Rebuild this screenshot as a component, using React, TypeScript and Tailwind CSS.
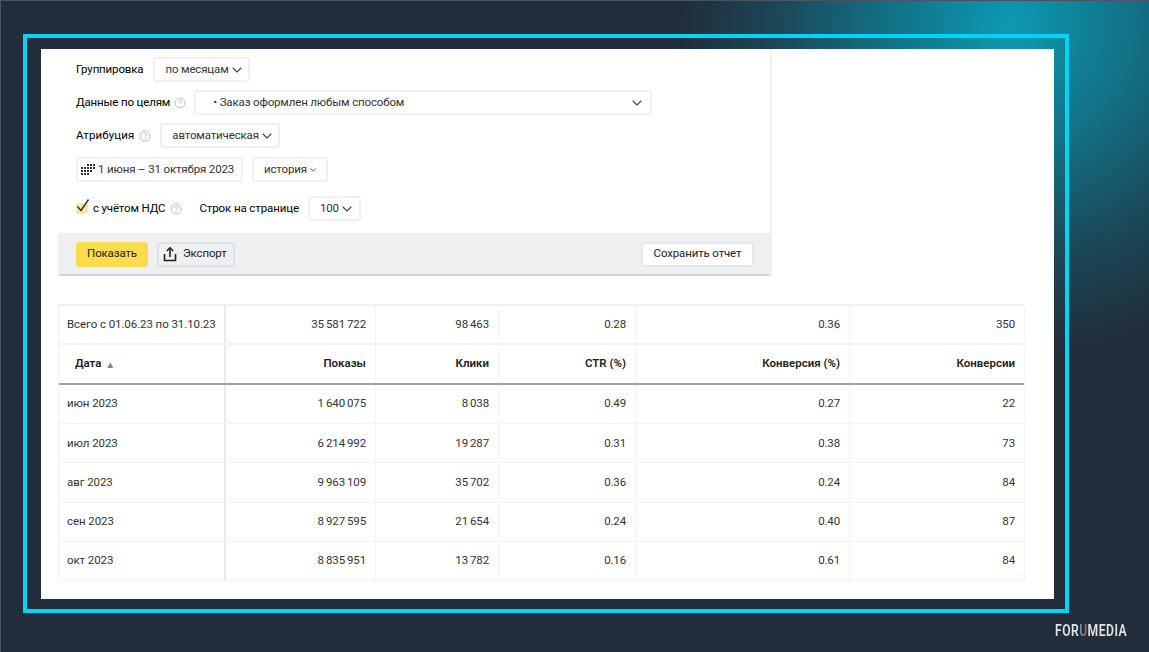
import { type FC, type ReactNode } from "react";
import { ChevronDown } from "lucide-react";

const rows = [
  ["июн 2023", "1 640 075", "8 038", "0.49", "0.27", "22"],
  ["июл 2023", "6 214 992", "19 287", "0.31", "0.38", "73"],
  ["авг 2023", "9 963 109", "35 702", "0.36", "0.24", "84"],
  ["сен 2023", "8 927 595", "21 654", "0.24", "0.40", "87"],
  ["окт 2023", "8 835 951", "13 782", "0.16", "0.61", "84"],
];

const Help: FC<{ className?: string }> = ({ className }) => (
  <svg viewBox="0 0 12 12" className={`h-3 w-3 shrink-0 ${className ?? ""}`} fill="none" stroke="#b5b5b5">
    <circle cx="6" cy="6" r="5" strokeWidth="0.9" />
    <path d="M4.5 4.8a1.5 1.5 0 1 1 2.3 1.2c-.5.3-.8.5-.8 1.1" strokeWidth="0.9" />
    <path d="M6 8.3v.9" strokeWidth="0.9" />
  </svg>
);

const Select: FC<{ children: ReactNode; className?: string; small?: boolean }> = ({ children, className, small }) => (
  <div
    className={`flex h-[25px] items-center justify-between whitespace-nowrap rounded-[3px] border-2 border-[#f0f0f0] bg-white text-[#333] ${className ?? ""}`}
  >
    <span>{children}</span>
    <ChevronDown className={`shrink-0 ${small ? "h-[10px] w-[10px]" : "h-4 w-4"}`} strokeWidth={small ? 2.2 : 1.7} color="#444" />
  </div>
);

const CalendarDots = () => (
  <svg viewBox="0 0 14 11" className="h-[11px] w-[14px] shrink-0" fill="#333">
    <rect x="6" y="0" width="2" height="2" />
    <rect x="9" y="0" width="2" height="2" />
    <rect x="12" y="0" width="2" height="2" />
    <rect x="0" y="3" width="2" height="2" />
    <rect x="3" y="3" width="2" height="2" />
    <rect x="6" y="3" width="2" height="2" />
    <rect x="9" y="3" width="2" height="2" />
    <rect x="12" y="3" width="2" height="2" />
    <rect x="0" y="6" width="2" height="2" />
    <rect x="3" y="6" width="2" height="2" />
    <rect x="6" y="6" width="2" height="2" />
    <rect x="9" y="6" width="2" height="2" />
    <rect x="0" y="9" width="2" height="2" />
    <rect x="3" y="9" width="2" height="2" />
    <rect x="6" y="9" width="2" height="2" />
  </svg>
);

const ExportIcon = () => (
  <svg viewBox="0 0 14 16" className="h-4 w-[14px]" fill="none" stroke="#222" strokeWidth="1.6">
    <path d="M7 11V2" />
    <path d="M3.8 5 7 1.8 10.2 5" />
    <path d="M1.5 8v6.5h11V8" />
  </svg>
);

const FilterCard = () => (
  <div className="flex h-[227px] w-[714px] flex-col rounded-b-[3px] border-r-2 border-b-2 border-[#f0f0f2] border-b-[#d4d6d8] bg-white">
    <div className="flex h-[184px] flex-col pl-[18px]">
      <div className="mt-[8px] flex h-[25px] items-center gap-[10px]">
        <span>Группировка</span>
        <Select className="w-[97px] pl-[10px] pr-[6px]">по месяцам</Select>
      </div>
      <div className="mt-[8px] flex h-[25px] items-center">
        <span>Данные по целям</span>
        <Help className="ml-[4px]" />
        <Select className="ml-[8px] w-[458px] pl-[17px] pr-[5px]">• Заказ оформлен любым способом</Select>
      </div>
      <div className="mt-[8px] flex h-[25px] items-center">
        <span className="tracking-[0.1px]">Атрибуция</span>
        <Help className="ml-[5px]" />
        <Select className="ml-[9px] w-[120px] pl-[10px] pr-[6px]">автоматическая</Select>
      </div>
      <div className="mt-[9px] flex h-[25px] items-center">
        <div className="flex h-[25px] w-[167px] items-center gap-[3px] whitespace-nowrap rounded-[3px] border-2 border-[#f0f0f0] pl-[3px] text-[#333]">
          <CalendarDots />
          <span>1 июня – 31 октября 2023</span>
        </div>
        <Select small className="ml-[9px] w-[76px] pl-[10px] pr-[8px]">
          история
        </Select>
      </div>
      <div className="mt-[14px] flex h-[25px] items-center">
        <div className="relative h-[11px] w-[12px] rounded-[2px] bg-[#f4e7a8]">
          <svg viewBox="0 0 14 16" className="absolute -top-[5px] left-0 h-4 w-[14px]" fill="none" stroke="#3a3a2a" strokeWidth="1.5">
            <path d="M1.5 8.5 5 12.5 12.5 1.5" />
          </svg>
        </div>
        <span className="ml-[5px]">с учётом НДС</span>
        <Help className="ml-[5px]" />
        <span className="ml-[17px] tracking-[-0.1px]">Строк на странице</span>
        <Select className="ml-[9px] w-[53px] pl-[10px] pr-[6px]">100</Select>
      </div>
    </div>
    <div className="flex h-[41px] items-center justify-between bg-[#eff0f2] pl-[18px] pr-[16px] pt-[1px]">
      <div className="flex items-center gap-[9px]">
        <div className="flex h-[25px] w-[72px] items-center justify-center rounded-[3px] bg-[#ffdb4d] text-[#222]">
          Показать
        </div>
        <div className="flex h-[25px] w-[78px] items-center gap-[6px] rounded-[3px] border-2 border-[#dfe0e2] pl-[4px] text-[#222]">
          <ExportIcon />
          <span>Экспорт</span>
        </div>
      </div>
      <div className="flex h-[25px] w-[113px] items-center justify-center rounded-[3px] border-2 border-[#e6e7e9] bg-white text-[#222]">
        Сохранить отчет
      </div>
    </div>
  </div>
);

const gridCols = "grid-cols-[167px_150px_123px_137px_214px_175px]";

const Cell: FC<{ children: ReactNode; index: number; className?: string }> = ({ children, index, className }) => (
  <div
    className={`flex items-center whitespace-nowrap pr-[9px] ${
      index === 0
        ? "border-r-2 border-[#e9e9e9] pl-[8px] tracking-[-0.08px]"
        : "justify-end border-r border-[#f2f2f2]"
    } ${className ?? ""}`}
  >
    {children}
  </div>
);

const ReportTable = () => (
  <div className="mt-[28px] w-[966px] border-t-2 border-l border-[#f0f0f0] text-[#333]">
    <div className={`grid h-[39px] border-b-2 border-[#f0f0f0] ${gridCols}`}>
      {["Всего с 01.06.23 по 31.10.23", "35 581 722", "98 463", "0.28", "0.36", "350"].map((value, i) => (
        <Cell key={i} index={i} className={i > 0 ? "[word-spacing:-0.6px]" : ""}>
          {value}
        </Cell>
      ))}
    </div>
    <div className={`grid h-[40px] border-b-2 border-[#a3a3a3] font-semibold tracking-normal text-[#222] ${gridCols}`}>
      <Cell index={0} className="pl-[16px]">
        Дата
        <span className="ml-[4px] text-[10px] font-normal text-[#888]">▲</span>
      </Cell>
      {["Показы", "Клики", "CTR (%)", "Конверсия (%)", "Конверсии"].map((value, i) => (
        <Cell key={value} index={i + 1}>
          {value}
        </Cell>
      ))}
    </div>
    {rows.map((row) => (
      <div key={row[0]} className={`grid h-[39.2px] border-b border-[#f2f2f2] ${gridCols}`}>
        {row.map((value, i) => (
          <Cell key={i} index={i} className={i > 0 ? "[word-spacing:-0.6px]" : ""}>
            {value}
          </Cell>
        ))}
      </div>
    ))}
  </div>
);

export default function App() {
  return (
    <div className="h-[652px] w-[1149px] overflow-hidden border-t border-l border-[#4a5561] bg-[#212d3a] bg-[radial-gradient(circle_330px_at_1010px_25px,#0d9ab2_0%,#137085_38%,#1b4858_70%,#212d3a_100%)] pl-[22px] pt-[33px] font-['Roboto',sans-serif] text-[11.5px] tracking-[-0.15px]">
      <div className="h-[579px] w-[1046px] border-4 border-[#00d4f8] pl-[14px] pr-[11px] pt-[11px]">
        <div className="h-[550px] w-[1013px] bg-white pl-[17px]">
          <FilterCard />
          <ReportTable />
        </div>
      </div>
      <div className="mr-[23px] mt-[9px] flex justify-end text-[16px] font-semibold leading-[18px] tracking-[0.6px] text-[#e0e2e4]">
        <span className="w-[71px] origin-left scale-x-[0.76] whitespace-nowrap">
          FOR<span className="bg-gradient-to-r from-[#1f9fd0] to-[#d8342c] bg-clip-text text-transparent">U</span>MEDIA
        </span>
      </div>
    </div>
  );
}
